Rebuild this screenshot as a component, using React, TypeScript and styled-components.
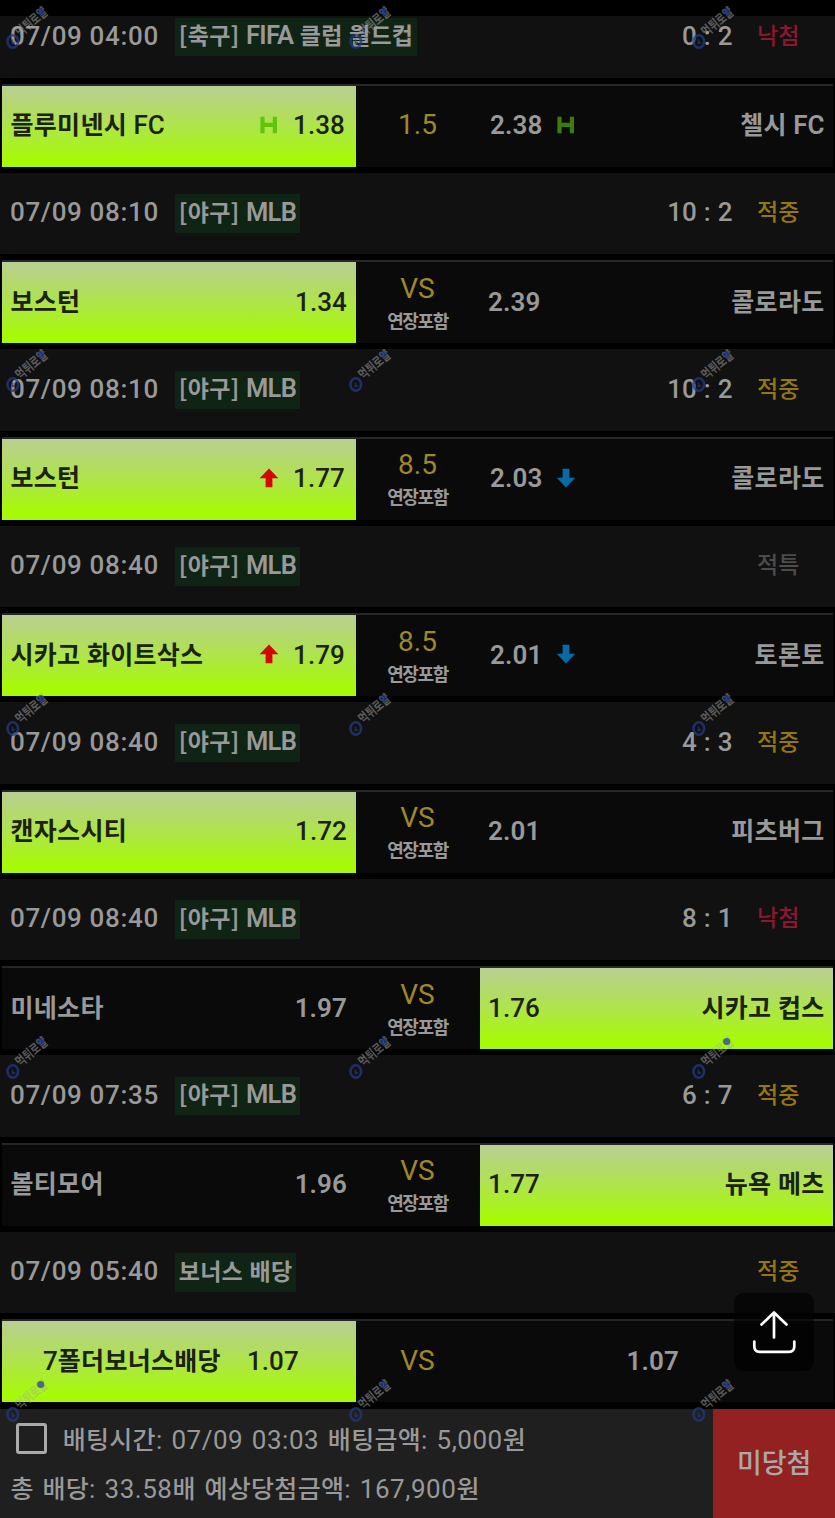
import React from 'react';
import styled, { createGlobalStyle, css } from 'styled-components';

const Global = createGlobalStyle`
  * { box-sizing: border-box; }
  html, body { margin: 0; background: #000; }
  body { font-family: Roboto, "Noto Sans CJK KR", sans-serif; overflow: hidden; }
`;

const Page = styled.main`
  position: relative;
  width: 835px;
  height: 1518px;
  overflow: hidden;
  background: #000;
  display: flex;
  flex-direction: column;
`;

const TopBar = styled.div`
  height: 15.7px;
  flex: none;
`;

type LabelProps = {
  $latin: number; $hangul: number; $track?: number; $hTrack?: number;
  $color?: string; $weight?: number; $hWeight?: number; $space?: number;
};

const Label = styled.span<LabelProps>`
  display: block;
  white-space: pre;
  line-height: 30px;
  font-size: ${p => p.$latin}px;
  font-weight: ${p => p.$weight ?? 500};
  letter-spacing: ${p => p.$track ?? 0}px;
  word-spacing: ${p => p.$space ?? 0}px;
  color: ${p => p.$color ?? '#999'};
  & > b {
    font-family: "Noto Sans CJK KR", sans-serif;
    font-size: ${p => p.$hangul}px;
    font-weight: ${p => p.$hWeight ?? p.$weight ?? 500};
    letter-spacing: ${p => p.$hTrack ?? 0}px;
    line-height: 1;
  }
`;

/* Hangul and Latin runs are set at different sizes so their heights agree. */
function Mixed({ text, ...rest }: LabelProps & { text: string }) {
  return (
    <Label {...rest}>
      {text.split(/([가-힣\[\]]+)/).map((s, i) => (i % 2 ? <b key={i}>{s}</b> : s))}
    </Label>
  );
}

const GameHead = styled.header<{ $first?: boolean }>`
  flex: none;
  height: ${p => (p.$first ? 62.3 : 81.5)}px;
  padding: 0 0 21.5px 10px;
  background: #111;
  display: flex;
  align-items: flex-end;
`;

const When = styled.div`
  width: 165.3px;
  height: 38.5px;
  padding-top: 3px;
`;

const Tag = styled.div`
  height: 38.5px;
  padding: 2.5px 4px 0 3.5px;
  background: #102415;
`;

const Result = styled.div`
  margin-left: auto;
  height: 38.5px;
  padding-top: 3px;
  display: flex;
`;

const Verdict = styled.div`
  width: 78px;
  margin: -1px 0 0 24.5px;
`;

const Match = styled.section`
  flex: none;
  height: 83px;
  margin: 6px 2px;
  border-top: 2px solid #272727;
  background: #0a0a0a;
  display: grid;
  grid-template-columns: 353.5px 124px 353.5px;
`;

const Side = styled.div<{ $on?: boolean; $bonus?: boolean; $right?: boolean }>`
  display: flex;
  align-items: center;
  padding: 0 8.5px 2px 8.5px;
  ${p => p.$on && css`
    background: linear-gradient(#b8cf92 0%, #b2dc62 34%, #abed30 66%, #a6fb04 92%);
  `}
  ${p => p.$bonus && (p.$right
    ? css`padding: 0 0 2px 147px;`
    : css`padding: 0 0 2px 41px; gap: 26px;`)}
`;

const Push = styled.div`
  flex: 1;
`;

const Mark = styled.div<{ $side: 'l' | 'r' }>`
  width: 20px;
  height: 20px;
  margin: ${p => (p.$side === 'l' ? '-1px 14.5px 0 0' : '-1px 0 0 14px')};
  & > svg { display: block; }
`;

const OddsBox = styled.div<{ $shift?: 'l' | 'r' }>`
  ${p => p.$shift === 'l' && css`margin-right: 2px;`}
  ${p => p.$shift === 'r' && css`margin-left: 2px;`}
`;

const Middle = styled.div<{ $stacked?: boolean }>`
  display: flex;
  flex-direction: column;
  align-items: center;
  justify-content: center;
  padding: ${p => (p.$stacked ? '5px 0 0' : '0 0 2px')};
`;

const Sub = styled.div`
  height: 30px;
  margin-top: 3px;
`;

const Foot = styled.footer`
  flex: 1;
  margin-top: 0.5px;
  background: #1f1f1f;
  display: flex;
`;

const Summary = styled.div`
  width: 713.3px;
  padding: 16.5px 0 0 10.5px;
`;

const Line = styled.div`
  display: flex;
  align-items: center;
  height: 30px;
  margin-bottom: 19px;
`;

const Check = styled.div`
  width: 31px;
  height: 31px;
  margin: -4px 15.7px 0 5.5px;
  border: 3px solid #aaa;
  border-radius: 3px;
`;

const Lost = styled.div`
  flex: 1;
  background: #942121;
  display: flex;
  align-items: center;
  justify-content: center;
  padding-bottom: 6px;
`;

const Share = styled.button`
  position: absolute;
  left: 734px;
  top: 1292.5px;
  width: 80px;
  height: 78.5px;
  padding: 0;
  border: 0;
  border-radius: 9px;
  background: rgba(0, 0, 0, 0.62);
  & > svg { display: block; }
`;

const Stamp = styled.svg`
  position: absolute;
  width: 60px;
  height: 60px;
  overflow: visible;
  pointer-events: none;
`;

type MarkKind = 'h' | 'up' | 'down';

const Icon = ({ kind, dark }: { kind: MarkKind; dark?: boolean }) => (
  <svg width="20" height="20" viewBox="0 0 20 20">
    {kind === 'h' && <path d="M3.5 1.8V18.2M15.9 1.8V18.2M3.5 9.8H15.9" fill="none" stroke={dark ? '#3c7d06' : '#60c40a'} strokeWidth="4.2" />}
    {kind === 'up' && <path d="M10 .5 19.3 10.3H13.4V19.3H6.6V10.3H.7Z" fill="#d40606" />}
    {kind === 'down' && <path d="M10 19.5 19.3 9.7H13.4V.7H6.6V9.7H.7Z" fill="#066aa4" />}
  </svg>
);

type Game = {
  time: string; tag: string; score?: string; verdict: string;
  home: string; ho: string; mid: string; ext?: boolean; ao: string; away: string;
  pick: 'home' | 'away'; hm?: MarkKind; am?: MarkKind; bonus?: boolean;
};

const games: Game[] = [
  { time: '07/09 04:00', tag: '[축구] FIFA 클럽 월드컵', score: '0 : 2', verdict: '낙첨', home: '플루미넨시 FC', ho: '1.38', mid: '1.5', ao: '2.38', away: '첼시 FC', pick: 'home', hm: 'h', am: 'h' },
  { time: '07/09 08:10', tag: '[야구] MLB', score: '10 : 2', verdict: '적중', home: '보스턴', ho: '1.34', mid: 'VS', ext: true, ao: '2.39', away: '콜로라도', pick: 'home' },
  { time: '07/09 08:10', tag: '[야구] MLB', score: '10 : 2', verdict: '적중', home: '보스턴', ho: '1.77', mid: '8.5', ext: true, ao: '2.03', away: '콜로라도', pick: 'home', hm: 'up', am: 'down' },
  { time: '07/09 08:40', tag: '[야구] MLB', verdict: '적특', home: '시카고 화이트삭스', ho: '1.79', mid: '8.5', ext: true, ao: '2.01', away: '토론토', pick: 'home', hm: 'up', am: 'down' },
  { time: '07/09 08:40', tag: '[야구] MLB', score: '4 : 3', verdict: '적중', home: '캔자스시티', ho: '1.72', mid: 'VS', ext: true, ao: '2.01', away: '피츠버그', pick: 'home' },
  { time: '07/09 08:40', tag: '[야구] MLB', score: '8 : 1', verdict: '낙첨', home: '미네소타', ho: '1.97', mid: 'VS', ext: true, ao: '1.76', away: '시카고 컵스', pick: 'away' },
  { time: '07/09 07:35', tag: '[야구] MLB', score: '6 : 7', verdict: '적중', home: '볼티모어', ho: '1.96', mid: 'VS', ext: true, ao: '1.77', away: '뉴욕 메츠', pick: 'away' },
  { time: '07/09 05:40', tag: '보너스 배당', verdict: '적중', home: '7폴더보너스배당', ho: '1.07', mid: 'VS', ao: '1.07', away: '', pick: 'home', bonus: true },
];

const verdictColor: Record<string, string> = { 낙첨: '#8c1730', 적중: '#94780f', 적특: '#4c4c4c' };
const ink = (on: boolean) => (on ? '#1c2212' : '#999');

const Team = ({ text, on }: { text: string; on: boolean }) => (
  <Mixed text={text} $latin={26} $hangul={25} $hTrack={0.3} $weight={on ? 500 : 600} $hWeight={700} $color={ink(on)} />
);
const Odds = ({ text, on }: { text: string; on: boolean }) => (
  <Mixed text={text} $latin={26} $hangul={25} $track={0.1} $weight={on ? 500 : 600} $color={ink(on)} />
);

function GameBlock({ g, first }: { g: Game; first: boolean }) {
  const h = g.pick === 'home';
  return (
    <>
      <GameHead $first={first}>
        <When><Mixed text={g.time} $latin={26} $hangul={25} $track={0.65} /></When>
        <Tag><Mixed text={g.tag} $latin={25.5} $hangul={23} $track={-0.7} $hTrack={0.25} $space={0.8} $weight={600} $hWeight={700} /></Tag>
        <Result>
          {g.score && <Mixed text={g.score} $latin={26} $hangul={25} $track={0} $space={0.6} />}
          <Verdict><Mixed text={g.verdict} $latin={26} $hangul={23} $color={verdictColor[g.verdict]} /></Verdict>
        </Result>
      </GameHead>
      <Match>
        <Side $on={h} $bonus={g.bonus}>
          <Team text={g.home} on={h} />
          {!g.bonus && <Push />}
          {g.hm && <Mark $side="l"><Icon kind={g.hm} /></Mark>}
          <OddsBox $shift={g.hm && 'l'}><Odds text={g.ho} on={h} /></OddsBox>
        </Side>
        <Middle $stacked={g.ext}>
          <Mixed text={g.mid} $latin={28} $hangul={25} $weight={400} $color="#9e8828" />
          {g.ext && <Sub><Mixed text="연장포함" $latin={18} $hangul={18} $hTrack={-1.4} $hWeight={700} /></Sub>}
        </Middle>
        <Side $on={!h} $bonus={g.bonus} $right>
          <OddsBox $shift={g.am && 'r'}><Odds text={g.ao} on={!h} /></OddsBox>
          {g.am && <Mark $side="r"><Icon kind={g.am} dark /></Mark>}
          {!g.bonus && <Push />}
          {g.away && <Team text={g.away} on={!h} />}
        </Side>
      </Match>
    </>
  );
}

const stampRows = [0, 343.3, 686.6, 1030, 1373];
const stampCols = [0, 343, 686];

export default function App() {
  return (
    <Page>
      <Global />
      <TopBar />
      {games.map((g, i) => <GameBlock key={i} g={g} first={i === 0} />)}
      <Foot>
        <Summary>
          <Line>
            <Check />
            <Mixed text="배팅시간: 07/09 03:03 배팅금액: 5,000원" $latin={26} $hangul={25} $track={0.5} $hTrack={0.3} $space={1.8} $weight={400} $hWeight={500} />
          </Line>
          <Line>
            <Mixed text="총 배당: 33.58배 예상당첨금액: 167,900원" $latin={26} $hangul={25} $track={0.55} $hTrack={0.3} $space={1.6} $weight={400} $hWeight={500} />
          </Line>
        </Summary>
        <Lost><Mixed text="미당첨" $latin={28} $hangul={27} $hTrack={0} $color="#aaa" /></Lost>
      </Foot>
      <Share aria-label="share">
        <svg width="80" height="78.5" viewBox="0 0 80 78.5" fill="none" stroke="#fff" strokeWidth="2.7" strokeLinecap="round" strokeLinejoin="round">
          <path d="M40 44.5V20M27.5 31.5 40 19.5 52.5 31.5M20.3 48.5V53.5Q20.3 58.8 25.6 58.8H55Q60.3 58.8 60.3 53.5V48.5" />
        </svg>
      </Share>
      {stampRows.map(y => stampCols.map(x => (
        <Stamp key={`${x}-${y}`} viewBox="0 0 60 60" style={{ left: x, top: y }}>
          <ellipse cx="12.8" cy="41.5" rx="5.3" ry="6.2" fill="none" stroke="#21397f" strokeWidth="2.6" opacity="0.75" />
          <path d="M12.5 39.5V43.5L15 42.5" fill="none" stroke="#21397f" strokeWidth="1.6" opacity="0.75" />
          <text transform="translate(20.3 37.3) rotate(-40)" fontSize="13.5" fontWeight="700" fill="#aaa" fillOpacity="0.5" textLength="37" lengthAdjust="spacingAndGlyphs" fontFamily="Noto Sans CJK KR, sans-serif">먹튀로얄</text>
          <circle cx="40.7" cy="11.5" r="3.6" fill="#1d3c92" opacity="0.7" />
        </Stamp>
      )))}
    </Page>
  );
}
